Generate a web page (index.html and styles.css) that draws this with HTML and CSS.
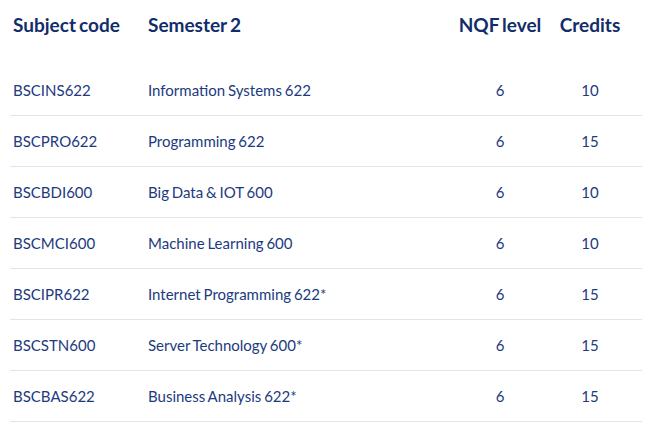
FILE: index.html
```html
<!DOCTYPE html>
<html>
<head>
<meta charset="utf-8">
<link rel="stylesheet" href="styles.css">
</head>
<body>
<table class="modules">
  <colgroup>
    <col class="c-code"><col class="c-name"><col class="c-nqf"><col class="c-cred">
  </colgroup>
  <thead>
    <tr>
      <th class="left">Subject code</th>
      <th class="left">Semester 2</th>
      <th class="center">NQF level</th>
      <th class="center cred">Credits</th>
    </tr>
  </thead>
  <tbody>
    <tr><td>BSCINS622</td><td>Information Systems 622</td><td class="center">6</td><td class="center cred">10</td></tr>
    <tr><td>BSCPRO622</td><td>Programming 622</td><td class="center">6</td><td class="center cred">15</td></tr>
    <tr><td>BSCBDI600</td><td>Big Data &amp; IOT 600</td><td class="center">6</td><td class="center cred">10</td></tr>
    <tr><td>BSCMCI600</td><td>Machine Learning 600</td><td class="center">6</td><td class="center cred">10</td></tr>
    <tr><td>BSCIPR622</td><td>Internet Programming 622*</td><td class="center">6</td><td class="center cred">15</td></tr>
    <tr><td>BSCSTN600</td><td>Server Technology 600*</td><td class="center">6</td><td class="center cred">15</td></tr>
    <tr><td>BSCBAS622</td><td>Business Analysis 622*</td><td class="center">6</td><td class="center cred">15</td></tr>
  </tbody>
</table>
</body>
</html>
```
FILE: styles.css
```css
html, body {
  margin: 0;
  padding: 0;
  background: #ffffff;
}
body {
  font-family: Lato, "Open Sans", sans-serif;
  color: #1c3a7e;
}
.modules {
  margin-left: 10px;
  width: 632px;
  border-collapse: collapse;
  table-layout: fixed;
}
.c-code { width: 135px; }
.c-name { width: 310px; }
.c-nqf { width: 90px; }
.c-cred { width: 97px; }
.modules th {
  height: 65px;
  box-sizing: border-box;
  padding: 12px 0 0 3px;
  vertical-align: top;
  font-size: 19px;
  line-height: 26px;
  font-weight: 700;
  color: #112d6a;
  white-space: nowrap;
  word-spacing: -1.5px;
}
.modules td {
  height: 50px;
  padding: 0 0 0 3px;
  vertical-align: middle;
  font-size: 15px;
  line-height: 20px;
  word-spacing: -1px;
  border-bottom: 1px solid #dfe5ec;
}
.modules .left { text-align: left; }
.modules .center { text-align: center; padding-left: 0; }
.modules .cred { padding-right: 7px; }
```
